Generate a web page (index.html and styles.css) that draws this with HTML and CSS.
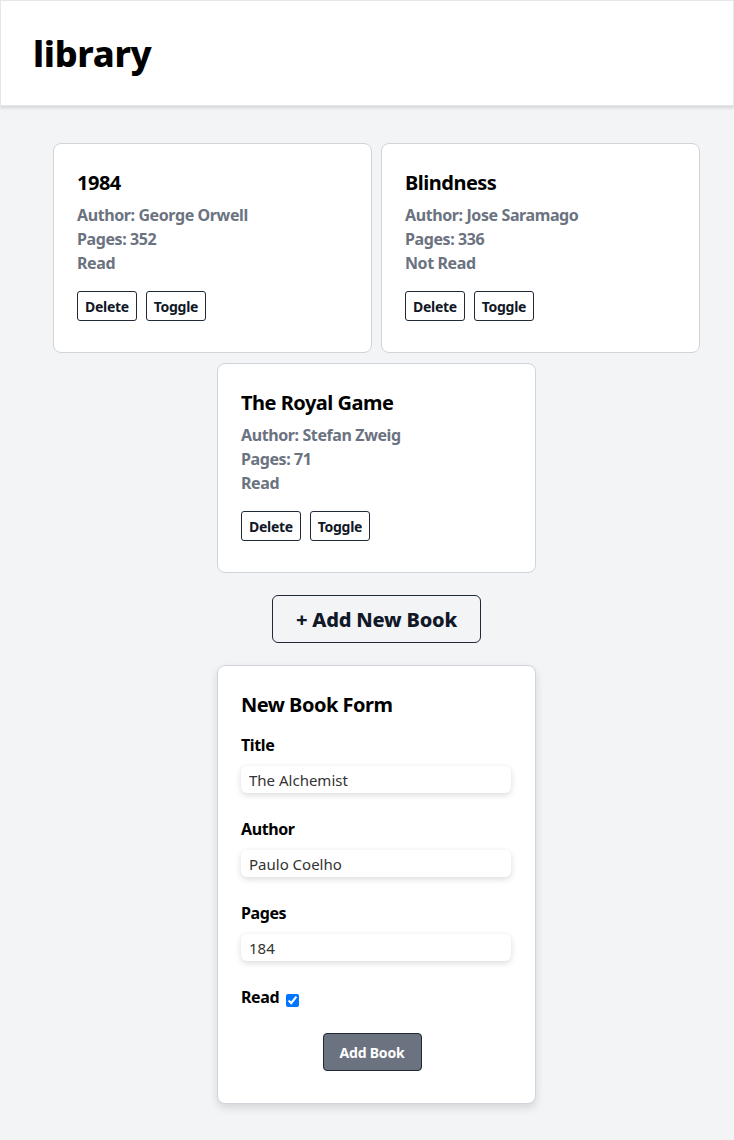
FILE: index.html
```html
<!DOCTYPE html>
<html lang="en">
<head>
<meta charset="utf-8">
<title>library</title>
<link rel="stylesheet" href="styles.css">
</head>
<body>
<header class="topbar">
  <h1 class="brand">library</h1>
</header>
<main class="main">
  <section class="shelf">
    <article class="book">
      <h2 class="book-title">1984</h2>
      <p class="book-meta">Author: George Orwell</p>
      <p class="book-meta">Pages: 352</p>
      <p class="book-meta">Read</p>
      <div class="book-actions">
        <button class="btn-small">Delete</button>
        <button class="btn-small">Toggle</button>
      </div>
    </article>
    <article class="book">
      <h2 class="book-title">Blindness</h2>
      <p class="book-meta">Author: Jose Saramago</p>
      <p class="book-meta">Pages: 336</p>
      <p class="book-meta">Not Read</p>
      <div class="book-actions">
        <button class="btn-small">Delete</button>
        <button class="btn-small">Toggle</button>
      </div>
    </article>
    <article class="book">
      <h2 class="book-title">The Royal Game</h2>
      <p class="book-meta">Author: Stefan Zweig</p>
      <p class="book-meta">Pages: 71</p>
      <p class="book-meta">Read</p>
      <div class="book-actions">
        <button class="btn-small">Delete</button>
        <button class="btn-small">Toggle</button>
      </div>
    </article>
  </section>
  <button class="btn-add">+ Add New Book</button>
  <form class="book-form">
    <h2 class="form-title">New Book Form</h2>
    <label class="field-label" for="title">Title</label>
    <input class="field-input" id="title" type="text" value="The Alchemist">
    <label class="field-label" for="author">Author</label>
    <input class="field-input" id="author" type="text" value="Paulo Coelho">
    <label class="field-label" for="pages">Pages</label>
    <input class="field-input" id="pages" type="text" value="184">
    <div class="read-row">
      <label class="field-label inline" for="read">Read</label>
      <input class="checkbox" id="read" type="checkbox" checked>
    </div>
    <div class="submit-row">
      <button class="btn-submit" type="button">Add Book</button>
    </div>
  </form>
</main>
</body>
</html>
```
FILE: styles.css
```css
* { box-sizing: border-box; }
html, body { margin: 0; padding: 0; }
body {
  background: #f3f4f6;
  font-family: "Noto Sans", "Open Sans", sans-serif;
  color: #000;
  min-height: 1140px;
}
.topbar {
  background: #fff;
  border: 1px solid #e5e7eb;
  height: 106px;
  padding: 0 32px;
  display: flex;
  align-items: center;
  box-shadow: 0 2px 3px rgba(0,0,0,0.12);
}
.brand {
  margin: 2px 0 0;
  font-size: 36px;
  font-weight: 800;
  line-height: 1;
  letter-spacing: -0.3px;
}
.main {
  padding: 37px 0 0 19px;
  display: flex;
  flex-direction: column;
  align-items: center;
}
.shelf {
  width: 647px;
  display: flex;
  flex-wrap: wrap;
  justify-content: center;
  gap: 10px 9px;
}
.book {
  width: 319px;
  height: 210px;
  background: #fff;
  border: 1px solid #d1d5db;
  border-radius: 8px;
  padding: 25px 24px 24px 23px;
}
.book-title {
  margin: 0 0 6px;
  font-size: 20px;
  font-weight: 700;
  line-height: 28px;
  letter-spacing: -0.5px;
}
.book-meta {
  margin: 0;
  font-size: 16px;
  font-weight: 700;
  line-height: 24px;
  color: #6b7280;
  letter-spacing: -0.4px;
}
.book-actions {
  margin-top: 16px;
  display: flex;
  gap: 9px;
}
.btn-small {
  font-family: inherit;
  font-size: 14px;
  font-weight: 700;
  letter-spacing: -0.3px;
  color: #111827;
  background: #fff;
  border: 1px solid #1f2937;
  border-radius: 3px;
  height: 30px;
  padding: 0 7px;
}
.btn-add {
  margin-top: 22px;
  width: 209px;
  height: 48px;
  font-family: inherit;
  font-size: 20px;
  font-weight: 800;
  letter-spacing: -0.2px;
  color: #111827;
  background: transparent;
  border: 1px solid #1f2937;
  border-radius: 6px;
}
.book-form {
  margin: 22px 0 37px;
  width: 319px;
  background: #fff;
  border: 1px solid #d1d5db;
  border-radius: 8px;
  padding: 24px 24px 32px 23px;
  box-shadow: 0 4px 8px rgba(0,0,0,0.12);
  display: flex;
  flex-direction: column;
}
.form-title {
  margin: 0 0 13px;
  font-size: 20px;
  font-weight: 700;
  line-height: 30px;
  letter-spacing: -0.5px;
}
.field-label {
  font-size: 16px;
  font-weight: 700;
  line-height: 24px;
  letter-spacing: -0.4px;
  margin-bottom: 9px;
}
.field-label.inline { margin: 0; }
.field-input {
  height: 27px;
  border: none;
  border-radius: 6px;
  padding: 0 8px;
  font-family: "Noto Sans", sans-serif;
  font-size: 15px;
  color: #333;
  background: #fff;
  box-shadow: 0 2px 6px rgba(0,0,0,0.15);
  margin-bottom: 24px;
}
.read-row {
  display: flex;
  align-items: center;
  gap: 7px;
  height: 24px;
}
.checkbox {
  margin: 6px 0 0 0;
  width: 13px;
  height: 13px;
  accent-color: #0075ff;
}
.submit-row {
  margin-top: 24px;
  display: flex;
  justify-content: center;
}
.btn-submit {
  width: 99px;
  height: 38px;
  margin-right: 8px;
  font-family: inherit;
  font-size: 14px;
  font-weight: 700;
  letter-spacing: -0.2px;
  color: #fff;
  background: #6b7280;
  border: 1px solid #1f2937;
  border-radius: 4px;
}
```
